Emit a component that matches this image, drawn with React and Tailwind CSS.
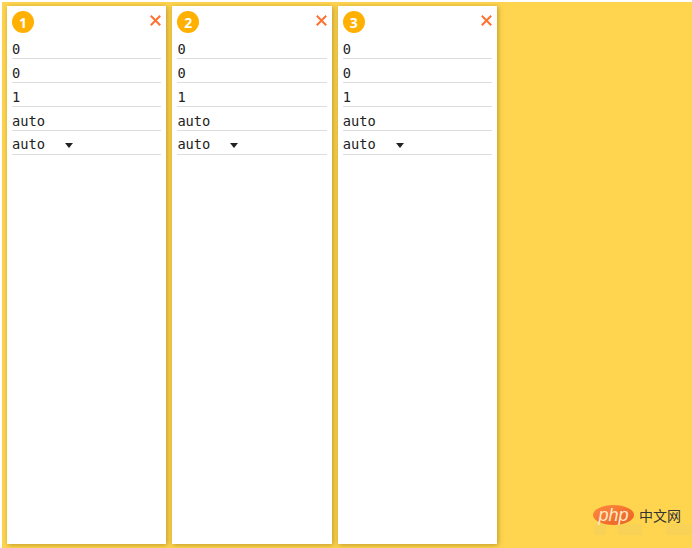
import React from "react";

const mono = "font-['DejaVu_Sans_Mono','Liberation_Mono',monospace]";

function Row({ value, select }) {
  return (
    <div className={`flex h-6 items-center border-b border-[#dddddd] text-[13.7px] text-[#222222] ${mono} ${select ? "pt-[4px]" : "pt-[5px]"}`}>
      <span>{value}</span>
      {select && (
        <svg width="8" height="5" viewBox="0 0 8 5" className="ml-[20px] mt-[2px]">
          <path d="M0 0H8L4 5Z" fill="#222222" />
        </svg>
      )}
    </div>
  );
}

function Card({ n }) {
  return (
    <div className="h-[538px] w-[159.6px] shrink-0 bg-white px-[5.2px] pt-[5px] shadow-[1px_1px_5px_rgba(120,90,0,0.5)]">
      <div className="flex h-[23px] items-start justify-between">
        <div className="flex size-[22px] items-center justify-center rounded-full bg-[#ffb000] font-['Open_Sans',sans-serif] text-[14px] font-bold text-white">
          {n}
        </div>
        <svg width="11" height="11" viewBox="0 0 11 11" className="mt-[4px]">
          <path d="M0.8 0.8L10.2 10.2M10.2 0.8L0.8 10.2" stroke="#ff7033" strokeWidth="2" />
        </svg>
      </div>
      <div className="pt-[1px]">
        <Row value="0" />
        <Row value="0" />
        <Row value="1" />
        <Row value="auto" />
        <Row value="auto" select />
      </div>
    </div>
  );
}

export default function App() {
  return (
    <div className="relative h-[548px] w-[692px] overflow-hidden bg-white pl-[2px] pt-[2px]">
      <div className="flex h-[546px] gap-[5.8px] bg-[#ffd54f] pl-[4.8px] pt-[4px]">
        <Card n={1} />
        <Card n={2} />
        <Card n={3} />
      </div>
      <div className="absolute left-[594px] top-[524px] h-[11px] w-[12px] bg-[#f7d257]" />
      <div className="absolute left-[618px] top-[524px] h-[11px] w-[24px] bg-[#f7d257]" />
      <div className="absolute left-[666px] top-[524px] h-[11px] w-[26px] bg-[#f7d257]" />
      <div className="absolute left-[593px] top-[505px] flex items-center">
        <div className="flex h-[20px] w-[41px] items-center justify-center rounded-[50%] bg-gradient-to-br from-[#ff8a3c] to-[#e85f24] font-['Liberation_Sans',sans-serif] text-[18px] italic leading-none text-[#ffe9c8]">
          php
        </div>
        <span className="ml-[5px] font-['Noto_Sans_CJK_SC',sans-serif] text-[14px] leading-none text-[#333333]">中文网</span>
      </div>
    </div>
  );
}
